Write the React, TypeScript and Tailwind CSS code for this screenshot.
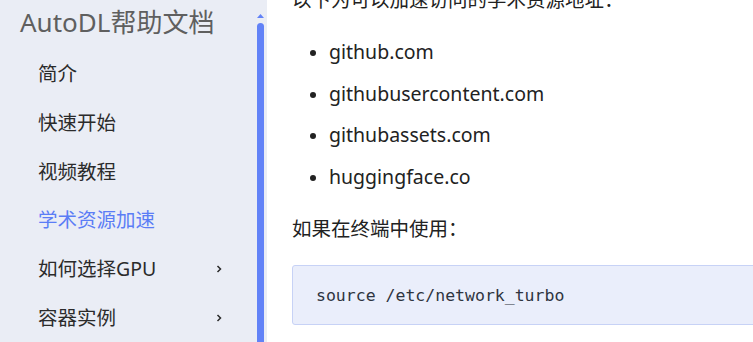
import React from "react";

const navItems: { label: string; active?: boolean; chevron?: boolean }[] = [
  { label: "简介" },
  { label: "快速开始" },
  { label: "视频教程" },
  { label: "学术资源加速", active: true },
  { label: "如何选择GPU", chevron: true },
  { label: "容器实例", chevron: true },
];

const links = ["github.com", "githubusercontent.com", "githubassets.com", "huggingface.co"];

function Chevron() {
  return (
    <svg width="8" height="10" viewBox="0 0 8 10" className="text-[#2b2b2b]">
      <polyline points="2.5,2 5.5,5 2.5,8" fill="none" stroke="currentColor" strokeWidth="1.5" />
    </svg>
  );
}

export default function App() {
  const sans = { fontFamily: '"Noto Sans", "Noto Sans CJK SC", sans-serif' };
  return (
    <div className="flex h-[342px] w-[753px] overflow-hidden bg-white" style={sans}>
      <aside className="flex w-[267px] shrink-0 bg-[#eaedf5]">
        <div className="flex-1 flex flex-col">
          <div className="h-[48px] pl-[20px] flex items-center text-[26px] leading-none text-[#5f5f5f]">
            AutoDL帮助文档
          </div>
          <nav className="mt-[5px] flex flex-col">
            {navItems.map((it) => (
              <div
                key={it.label}
                className={`h-[48.8px] pl-[38px] pr-[34px] flex items-center justify-between text-[19.5px] ${
                  it.active ? "text-[#5b7df6]" : "text-[#2b2b2b]"
                }`}
              >
                <span>{it.label}</span>
                {it.chevron && <Chevron />}
              </div>
            ))}
          </nav>
        </div>
        <div className="w-[7px] mr-[3px] flex flex-col items-center">
          <svg width="7" height="4" viewBox="0 0 7 4" className="mt-[14px]">
            <polygon points="3.5,0 7,4 0,4" fill="#6282f7" />
          </svg>
          <div className="mt-[5px] w-[7px] flex-1 rounded-t-[4px] bg-[#6282f7]" />
        </div>
      </aside>
      <main className="flex-1 pl-[25px] text-[19.5px] text-[#222]">
        <p className="mt-[-14px] leading-[28px] whitespace-nowrap">以下为可以加速访问的学术资源地址：</p>
        <ul className="mt-[17px] pl-[37px] list-disc marker:text-[#222] marker:text-[17px]">
          {links.map((l) => (
            <li key={l} className="h-[41.7px] leading-[41.7px]">
              {l}
            </li>
          ))}
        </ul>
        <p className="mt-[17px] leading-[28px]">如果在终端中使用：</p>
        <div className="mt-[22px] h-[60px] w-[480px] rounded-[3px] border border-[#c7d2f6] bg-[#eaeefb] pl-[23px] pt-[4px] flex items-center">
          <code
            className="text-[16.5px] text-[#2e3440]"
            style={{ fontFamily: '"DejaVu Sans Mono", monospace' }}
          >
            source /etc/network_turbo
          </code>
        </div>
      </main>
    </div>
  );
}
